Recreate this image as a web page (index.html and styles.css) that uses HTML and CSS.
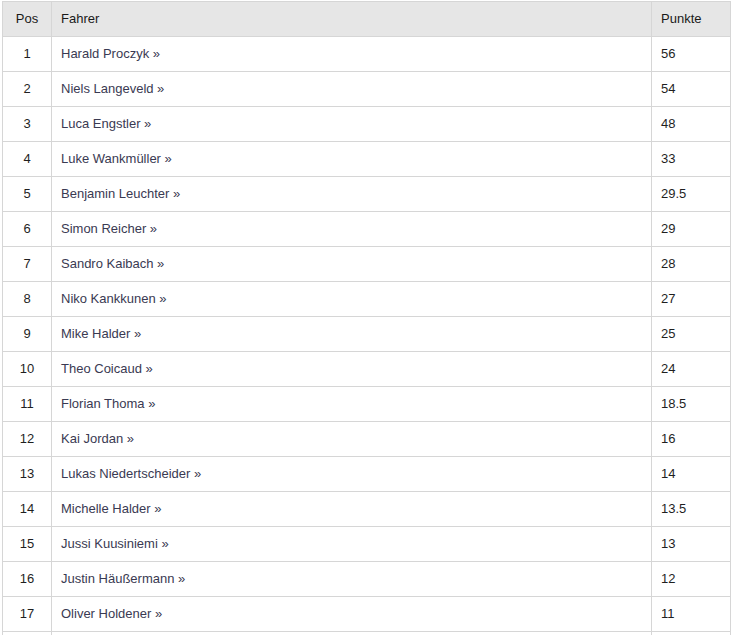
FILE: index.html
```html
<!DOCTYPE html>
<html lang="de">
<head>
<meta charset="utf-8">
<title>Wertung</title>
<link rel="stylesheet" href="styles.css">
</head>
<body>
<table class="standings">
  <thead>
    <tr><th class="pos">Pos</th><th class="name">Fahrer</th><th class="pts">Punkte</th></tr>
  </thead>
  <tbody>
    <tr><td class="pos">1</td><td class="name"><a href="#">Harald Proczyk »</a></td><td class="pts">56</td></tr>
    <tr><td class="pos">2</td><td class="name"><a href="#">Niels Langeveld »</a></td><td class="pts">54</td></tr>
    <tr><td class="pos">3</td><td class="name"><a href="#">Luca Engstler »</a></td><td class="pts">48</td></tr>
    <tr><td class="pos">4</td><td class="name"><a href="#">Luke Wankmüller »</a></td><td class="pts">33</td></tr>
    <tr><td class="pos">5</td><td class="name"><a href="#">Benjamin Leuchter »</a></td><td class="pts">29.5</td></tr>
    <tr><td class="pos">6</td><td class="name"><a href="#">Simon Reicher »</a></td><td class="pts">29</td></tr>
    <tr><td class="pos">7</td><td class="name"><a href="#">Sandro Kaibach »</a></td><td class="pts">28</td></tr>
    <tr><td class="pos">8</td><td class="name"><a href="#">Niko Kankkunen »</a></td><td class="pts">27</td></tr>
    <tr><td class="pos">9</td><td class="name"><a href="#">Mike Halder »</a></td><td class="pts">25</td></tr>
    <tr><td class="pos">10</td><td class="name"><a href="#">Theo Coicaud »</a></td><td class="pts">24</td></tr>
    <tr><td class="pos">11</td><td class="name"><a href="#">Florian Thoma »</a></td><td class="pts">18.5</td></tr>
    <tr><td class="pos">12</td><td class="name"><a href="#">Kai Jordan »</a></td><td class="pts">16</td></tr>
    <tr><td class="pos">13</td><td class="name"><a href="#">Lukas Niedertscheider »</a></td><td class="pts">14</td></tr>
    <tr><td class="pos">14</td><td class="name"><a href="#">Michelle Halder »</a></td><td class="pts">13.5</td></tr>
    <tr><td class="pos">15</td><td class="name"><a href="#">Jussi Kuusiniemi »</a></td><td class="pts">13</td></tr>
    <tr><td class="pos">16</td><td class="name"><a href="#">Justin Häußermann »</a></td><td class="pts">12</td></tr>
    <tr><td class="pos">17</td><td class="name"><a href="#">Oliver Holdener »</a></td><td class="pts">11</td></tr>
    <tr><td class="pos">18</td><td class="name"><a href="#">Nicolas Beraud »</a></td><td class="pts">10</td></tr>
  </tbody>
</table>
</body>
</html>
```
FILE: styles.css
```css
html, body {
  margin: 0;
  padding: 0;
  background: #ffffff;
}
body {
  padding: 1px 0 0 2px;
  font-family: "Liberation Sans", Arial, sans-serif;
  font-size: 13px;
  color: #222222;
}
.standings {
  border-collapse: collapse;
  table-layout: fixed;
  width: 729px;
}
.standings th,
.standings td {
  border: 1px solid #d6d6d6;
  height: 35px;
  padding: 0 9px;
  box-sizing: border-box;
  text-align: left;
  vertical-align: middle;
  font-weight: normal;
  line-height: 16px;
}
.standings thead th {
  background: #e6e6e6;
  color: #1a1a1a;
}
.standings .pos {
  width: 49px;
  text-align: center;
  padding: 0;
}
.standings .pts {
  width: 79px;
}
.standings td.pts,
.standings td.pos {
  color: #1f1f1f;
}
.standings a {
  color: #3a3a52;
  text-decoration: none;
}
```
